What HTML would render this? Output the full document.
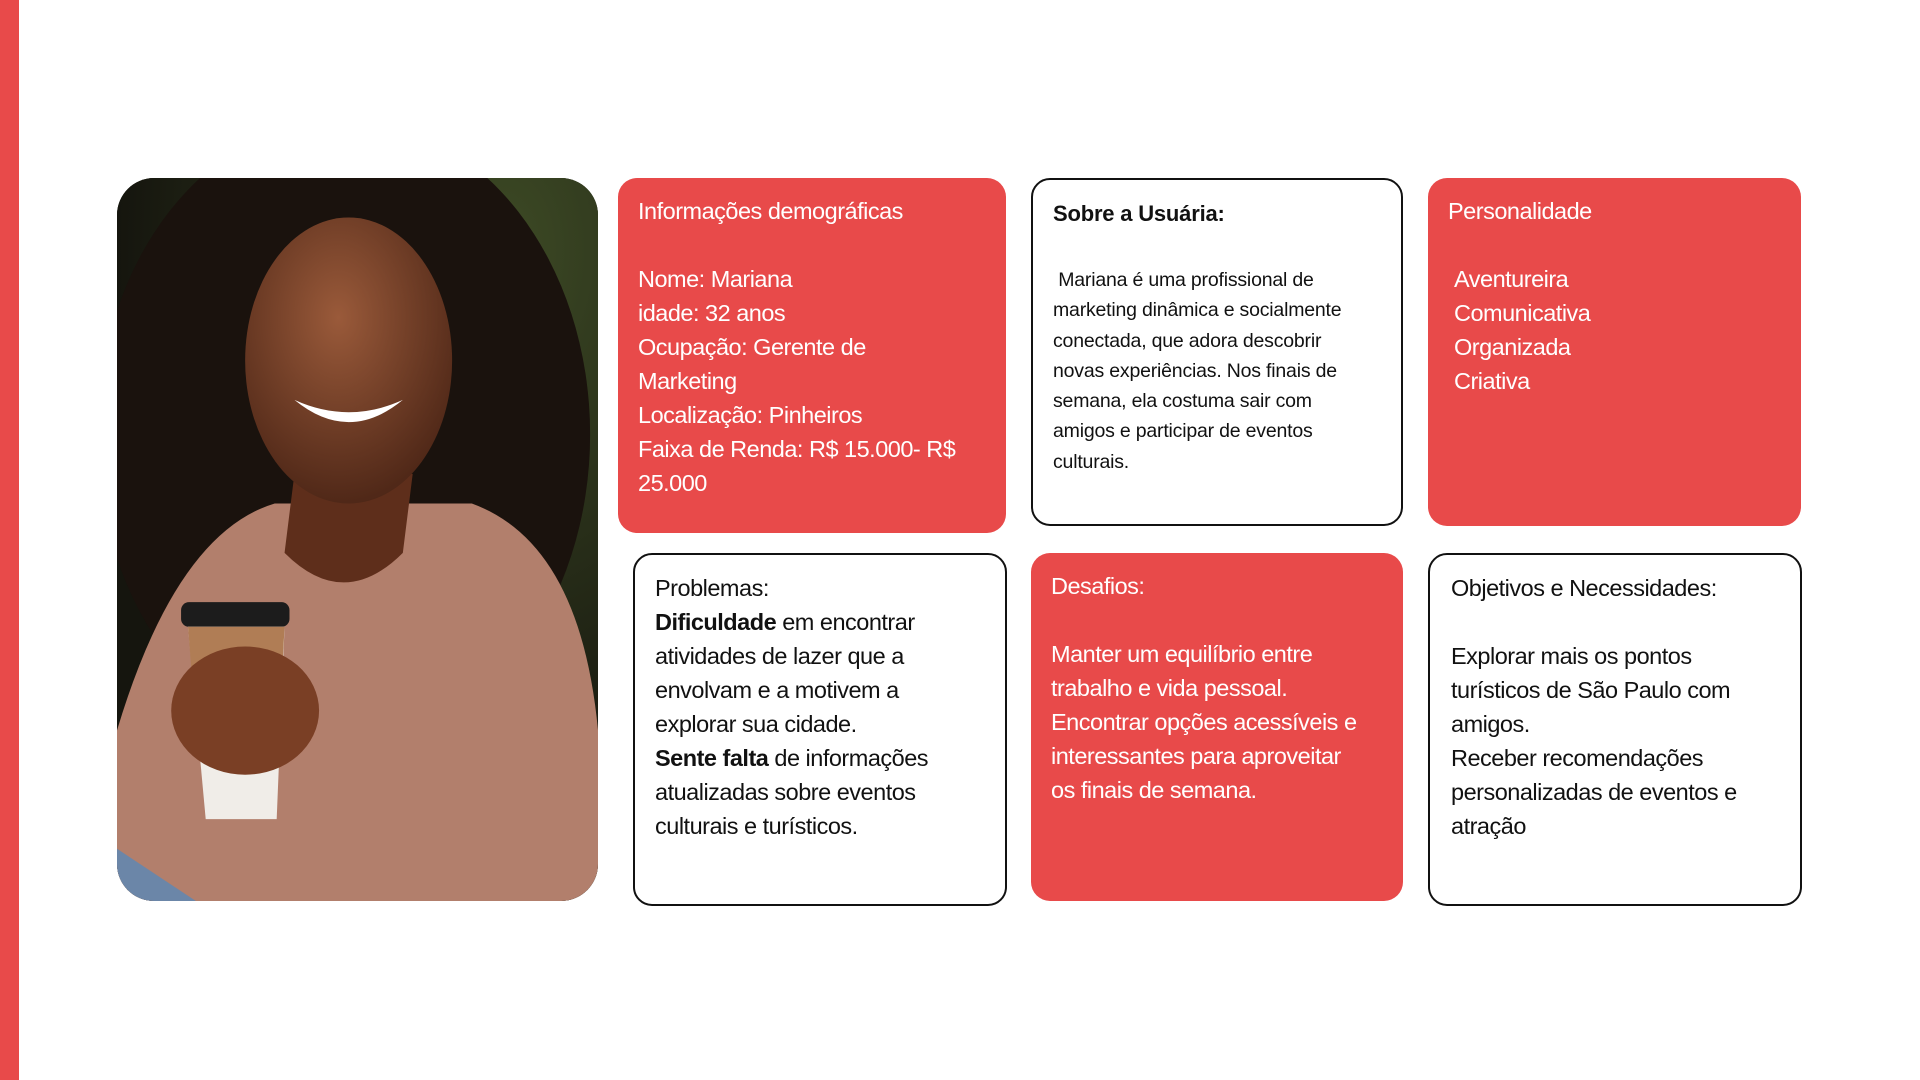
<!DOCTYPE html>
<html><head><meta charset="utf-8"><style>
body{margin:0;width:1920px;height:1080px;background:#fff;position:relative;overflow:hidden;font-family:"Liberation Sans",sans-serif;}
.bar{position:absolute;left:0;top:0;width:19px;height:1080px;background:#E84A4A}
.c{position:absolute;box-sizing:border-box;border-radius:19px;font-size:23.5px;line-height:34px;letter-spacing:-0.5px;white-space:nowrap}
.r{background:#E84A4A;color:#fff}
.w{border:2px solid #111;color:#111}
p{margin:0}
.photo{position:absolute;left:117px;top:178px;width:481px;height:723px;border-radius:37px;overflow:hidden;background:#1e2113}
</style></head><body>
<div class="bar"></div>
<div class="photo">
<svg width="481" height="723" viewBox="0 0 488 733" preserveAspectRatio="none">
<defs>
<radialGradient id="bg" cx="0.8" cy="0.1" r="0.8"><stop offset="0" stop-color="#3d4a25"/><stop offset="1" stop-color="#15150e"/></radialGradient>
<radialGradient id="sk" cx="0.45" cy="0.35" r="0.7"><stop offset="0" stop-color="#9a5a3a"/><stop offset="1" stop-color="#4a2415"/></radialGradient>
</defs>
<rect width="488" height="733" fill="url(#bg)"/>
<ellipse cx="230" cy="260" rx="250" ry="320" fill="#1a120d"/>
<path d="M0 560 Q60 360 160 330 L360 330 Q470 370 488 560 L488 733 L0 733Z" fill="#b27f6c"/>
<path d="M170 380 Q230 440 290 380 L300 300 L180 300Z" fill="#5e2e1b"/>
<ellipse cx="235" cy="185" rx="105" ry="145" fill="url(#sk)"/>
<path d="M180 225 Q235 270 290 225 Q235 250 180 225Z" fill="#fff"/>
<rect x="65" y="430" width="110" height="25" rx="8" fill="#1c1c1c"/>
<path d="M72 455 L170 455 L162 650 L90 650Z" fill="#f0ede8"/>
<path d="M72 455 L170 455 L166 530 L78 530Z" fill="#b07d55"/>
<ellipse cx="130" cy="540" rx="75" ry="65" fill="#7a3f25"/>
<path d="M0 680 L80 733 L0 733Z" fill="#6b86a8"/>
</svg>
</div>
<div class="c r" style="left:618px;top:178px;width:388px;height:355px;padding:16px 20px">
<p>Informações demográficas</p><p>&nbsp;</p>
<p>Nome: Mariana<br>idade: 32 anos<br>Ocupação: Gerente de<br>Marketing<br>Localização: Pinheiros<br>Faixa de Renda: R$ 15.000- R$<br>25.000</p>
</div>
<div class="c w" style="left:1031px;top:178px;width:372px;height:348px;padding:17px 20px;font-size:19.5px;line-height:30.3px;letter-spacing:-0.2px">
<p style="font-weight:bold;font-size:22px;line-height:34px">Sobre a Usuária:</p>
<p style="margin-top:34px">&nbsp;Mariana é uma profissional de<br>marketing dinâmica e socialmente<br>conectada, que adora descobrir<br>novas experiências. Nos finais de<br>semana, ela costuma sair com<br>amigos e participar de eventos<br>culturais.</p>
</div>
<div class="c r" style="left:1428px;top:178px;width:373px;height:348px;padding:16px 20px">
<p>Personalidade</p><p>&nbsp;</p>
<p style="padding-left:6px">Aventureira<br>Comunicativa<br>Organizada<br>Criativa</p>
</div>
<div class="c w" style="left:633px;top:553px;width:374px;height:353px;padding:16px 20px">
<p>Problemas:<br><b>Dificuldade</b> em encontrar<br>atividades de lazer que a<br>envolvam e a motivem a<br>explorar sua cidade.<br><b>Sente falta</b> de informações<br>atualizadas sobre eventos<br>culturais e turísticos.</p>
</div>
<div class="c r" style="left:1031px;top:553px;width:372px;height:348px;padding:16px 20px">
<p>Desafios:</p><p>&nbsp;</p>
<p>Manter um equilíbrio entre<br>trabalho e vida pessoal.<br>Encontrar opções acessíveis e<br>interessantes para aproveitar<br>os finais de semana.</p>
</div>
<div class="c w" style="left:1428px;top:553px;width:374px;height:353px;padding:16px 21px">
<p>Objetivos e Necessidades:</p><p>&nbsp;</p>
<p>Explorar mais os pontos<br>turísticos de São Paulo com<br>amigos.<br>Receber recomendações<br>personalizadas de eventos e<br>atração</p>
</div>
</body></html>
